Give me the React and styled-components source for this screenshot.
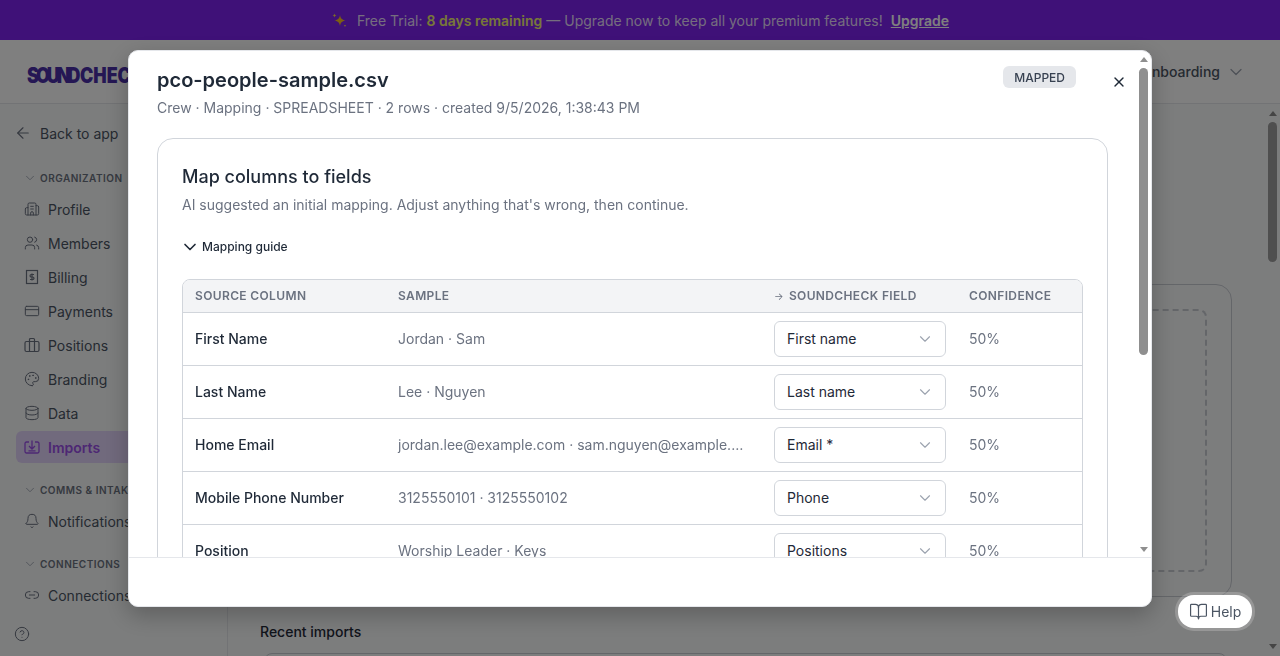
import React from 'react';
import styled, { createGlobalStyle } from 'styled-components';
import {
  ArrowLeft,
  BookOpen,
  Building2,
  Bell,
  ChevronDown,
  CircleHelp,
  CreditCard,
  Database,
  Link2,
  Palette,
  Users,
  X,
} from 'lucide-react';

const GlobalStyle = createGlobalStyle`
  * { box-sizing: border-box; }
  html, body { margin: 0; height: 100%; overflow: hidden; }
  body {
    font-family: 'Inter', 'Liberation Sans', sans-serif;
    font-size: 14px;
    color: #1f2937;
    background: #f9fafb;
  }
`;

const Shell = styled.div`
  display: flex;
  flex-direction: column;
  height: 656px;
  overflow: hidden;
`;

const Banner = styled.div`
  flex: none;
  height: 40px;
  background: #7e22f0;
  color: rgba(255, 255, 255, 0.85);
  display: flex;
  align-items: center;
  justify-content: center;
  gap: 9px;
  font-size: 14px;

  & b {
    color: #f0f070;
    font-weight: 600;
  }
  & a {
    color: #fff;
    font-weight: 600;
    text-decoration: underline;
    margin-left: -1px;
  }
`;

const TopBar = styled.header`
  flex: none;
  height: 64px;
  background: #fff;
  border-bottom: 1px solid #e5e7eb;
  display: flex;
  align-items: center;
  justify-content: space-between;
  padding: 0 34px 0 27px;
`;

const Logo = styled.div`
  margin-top: 8px;
  font-size: 21px;
  font-weight: 900;
  color: #4a2fa8;
  white-space: nowrap;
  transform: scaleX(0.85);
  transform-origin: left center;

  & span {
    letter-spacing: -3.5px;
    margin-right: 3px;
  }
`;

const WorkspaceMenu = styled.div`
  display: flex;
  align-items: center;
  gap: 6px;
  font-size: 14px;
  font-weight: 500;
  color: #4b5563;

  & svg {
    color: #9ca3af;
  }
`;

const Body = styled.div`
  flex: 1;
  display: flex;
  min-height: 0;
`;

const Sidebar = styled.aside`
  flex: none;
  width: 228px;
  border-right: 1px solid #e5e7eb;
  padding: 13px 16px 14px;
  display: flex;
  flex-direction: column;
`;

const BackLink = styled.div`
  height: 32px;
  display: flex;
  align-items: center;
  gap: 8px;
  margin: 0 0 20px -2px;
  color: #4b5563;

  & svg {
    color: #6b7280;
  }
`;

const SectionLabel = styled.div`
  height: 16px;
  display: flex;
  align-items: center;
  gap: 3px;
  padding: 1px 0 0 7px;
  margin: ${(p) => (p.$first ? '0' : '18px')} 0 8px;
  font-size: 10px;
  font-weight: 600;
  letter-spacing: 0.05em;
  color: #6b7280;
  white-space: nowrap;

  & svg {
    color: #9ca3af;
  }
`;

const NavList = styled.nav`
  display: flex;
  flex-direction: column;
  gap: 2px;
`;

const NavItem = styled.div`
  height: 32px;
  display: flex;
  align-items: center;
  gap: 8px;
  padding-left: 8px;
  border-radius: 6px;
  white-space: nowrap;
  background: ${(p) => (p.$active ? '#e3d4fb' : 'transparent')};
  color: ${(p) => (p.$active ? '#9b4fe8' : '#4b5563')};
  font-weight: ${(p) => (p.$active ? 600 : 400)};

  & svg {
    flex: none;
    color: ${(p) => (p.$active ? '#9b4fe8' : '#6b7280')};
  }
`;

const SidebarHelp = styled.div`
  margin: auto 0 0 -2px;
  height: 16px;
  color: #6b7280;
`;

const Main = styled.main`
  flex: 1;
  min-width: 0;
  overflow: hidden;
  padding: 180px 33px 0 32px;
`;

const UploadCard = styled.section`
  height: 313px;
  border: 1px solid #c9cdd3;
  border-radius: 16px;
  padding: 24px;
`;

const DropZone = styled.div`
  height: 100%;
  border: 2px dashed #c9cdd3;
  border-radius: 8px;
`;

const RecentTitle = styled.h2`
  margin: 25px 0 11px;
  font-size: 14px;
  line-height: 20px;
  font-weight: 500;
  color: #1f2937;
`;

const RecentTable = styled.div`
  height: 40px;
  margin: 0 5px 0 4px;
  border: 1px solid #c9cdd3;
  border-radius: 8px;
`;

const Rail = styled.div`
  flex: none;
  width: 15px;
  display: flex;
  flex-direction: column;
  align-items: center;
  padding: ${(p) => p.$pad};
`;

const ArrowUp = styled.div`
  flex: none;
  width: 0;
  height: 0;
  border: 4.5px solid transparent;
  border-top: 0;
  border-bottom: 5px solid ${(p) => p.$color};
`;

const ArrowDown = styled(ArrowUp)`
  margin-top: auto;
  border: 4.5px solid transparent;
  border-bottom: 0;
  border-top: 5px solid ${(p) => p.$color};
`;

const Thumb = styled.div`
  flex: none;
  width: 9px;
  height: ${(p) => p.$height}px;
  margin-top: 6px;
  border-radius: 5px;
  background: ${(p) => p.$color};
`;

const Backdrop = styled.div`
  position: fixed;
  inset: 0;
  background: rgba(0, 0, 0, 0.5);
`;

const Modal = styled.div`
  position: fixed;
  left: 128px;
  top: 50px;
  width: 1024px;
  height: 557px;
  background: #fff;
  border: 1px solid #e5e7eb;
  border-radius: 10px;
  box-shadow: 0 8px 24px rgba(0, 0, 0, 0.25);
  display: flex;
  flex-direction: column;
  overflow: hidden;
`;

const ModalBody = styled.div`
  flex: 1;
  min-height: 0;
  display: flex;
`;

const ModalScroll = styled.div`
  flex: 1;
  min-width: 0;
  overflow: hidden;
  padding: 15px 28px 0 28px;
`;

const ModalFooter = styled.div`
  flex: none;
  height: 49px;
  border-top: 1px solid #e5e7eb;
`;

const ModalHeader = styled.div`
  display: flex;
  align-items: flex-start;
  justify-content: space-between;
  margin-bottom: 20px;
`;

const FileName = styled.h1`
  margin: 0 0 4px;
  font-size: 20px;
  line-height: 28px;
  font-weight: 600;
  color: #1f2937;
`;

const FileMeta = styled.p`
  margin: 0;
  font-size: 14px;
  line-height: 20px;
  color: #6b7280;
`;

const HeaderActions = styled.div`
  display: flex;
  align-items: flex-start;
  gap: 35px;
  margin-right: -19px;
`;

const Badge = styled.span`
  height: 22px;
  padding: 0 11px;
  display: flex;
  align-items: center;
  border-radius: 6px;
  background: #e5e7eb;
  color: #374151;
  font-size: 12px;
  font-weight: 500;
`;

const CloseButton = styled.button`
  border: 0;
  padding: 0;
  margin-top: 8px;
  background: none;
  color: #1f2937;
  display: flex;
`;

const Card = styled.section`
  border: 1px solid #d1d5db;
  border-radius: 16px;
  padding: 24px;
`;

const CardTitle = styled.h2`
  margin: 0 0 4px;
  font-size: 18px;
  line-height: 28px;
  font-weight: 500;
  color: #1f2937;
`;

const CardHint = styled.p`
  margin: 0 0 22px;
  font-size: 14px;
  line-height: 20px;
  color: #6b7280;
`;

const GuideToggle = styled.div`
  display: flex;
  align-items: center;
  gap: 2px;
  margin-left: -2px;
  font-size: 12px;
  line-height: 20px;
  font-weight: 500;
  color: #1f2937;
  margin-bottom: 22px;

  & svg {
    flex: none;
  }
`;

const TableFrame = styled.div`
  border: 1px solid #d1d5db;
  border-radius: 8px;
  overflow: hidden;
`;

const Row = styled.div`
  display: grid;
  grid-template-columns: 203px 376px 195px 1fr;
  align-items: center;
  height: ${(p) => (p.$head ? '33px' : '53px')};
  background: ${(p) => (p.$head ? '#f3f4f6' : '#fff')};
  border-bottom: 1px solid #d1d5db;
`;

const HeadCell = styled.div`
  padding: 0 0 2px 12px;
  font-size: 12px;
  font-weight: 600;
  letter-spacing: 0.03em;
  color: #6b7280;
  white-space: nowrap;

  & small {
    font-size: 10px;
    font-weight: 400;
    letter-spacing: 0;
    margin-right: 2px;
  }
`;

const SourceCell = styled.div`
  padding: 0 0 2px 12px;
  font-weight: 500;
  color: #1f2937;
  white-space: nowrap;
`;

const SampleCell = styled.div`
  padding: 0 18px 2px 12px;
  color: #6b7280;
  white-space: nowrap;
  overflow: hidden;
  text-overflow: ellipsis;
`;

const FieldCell = styled.div`
  padding-left: 12px;
`;

const FieldSelect = styled.div`
  width: 172px;
  height: 36px;
  display: flex;
  align-items: center;
  justify-content: space-between;
  padding: 0 11px 1px 12px;
  border: 1px solid #d1d5db;
  border-radius: 6px;
  background: #fff;
  color: #1f2937;

  & svg {
    color: #9ca3af;
  }
`;

const ConfidenceCell = styled.div`
  padding: 0 0 2px 12px;
  color: #6b7280;
`;

const HelpButton = styled.button`
  position: fixed;
  left: 1178px;
  top: 595px;
  width: 74px;
  height: 33px;
  border: 0;
  border-radius: 16px;
  background: #fff;
  box-shadow: 0 0 0 3px rgba(255, 255, 255, 0.2);
  display: flex;
  align-items: center;
  justify-content: center;
  gap: 3px;
  font-family: inherit;
  font-size: 14px;
  color: #4b5563;
`;

const Sparkle = () => (
  <svg width="17" height="17" viewBox="0 0 17 17">
    <path d="M9 3c.6 3.4 1.8 4.8 5.500 5.500C10.800 9.200 9.600 10.600 9 14c-.6-3.400-1.800-4.800-5.500-5.500C7.200 7.800 8.400 6.400 9 3z" fill="#fbbf24" />
    <path d="M3.500 1.500c.2 1.200.7 1.700 2 2-1.300.3-1.800.8-2 2-.2-1.200-.7-1.700-2-2 1.300-.3 1.800-.8 2-2z" fill="#fcd34d" />
    <path d="M14 12.500c.1.800.5 1.100 1.300 1.300-.8.200-1.200.5-1.300 1.300-.1-.8-.5-1.100-1.300-1.300.8-.2 1.200-.5 1.300-1.300z" fill="#fcd34d" />
  </svg>
);

const BillingIcon = () => (
  <svg width="16" height="16" viewBox="0 0 16 16" fill="none" stroke="currentColor" strokeWidth="1.2">
    <rect x="2.500" y="1.500" width="11" height="13" />
    <path d="M10 5.500H7.300a1.200 1.200 0 0 0 0 2.500h1.400a1.200 1.200 0 0 1 0 2.500H6M8 4.500v7" />
  </svg>
);

const PositionsIcon = () => (
  <svg width="16" height="16" viewBox="0 0 16 16" fill="none" stroke="currentColor" strokeWidth="1.2">
    <rect x="1" y="4.500" width="14" height="10" rx="1.500" />
    <path d="M5.500 4.500V2.500a1 1 0 0 1 1-1h3a1 1 0 0 1 1 1v2M5.500 4.500v10M10.500 4.500v10" />
  </svg>
);

const ImportsIcon = () => (
  <svg width="16" height="16" viewBox="0 0 16 16" fill="none" stroke="currentColor" strokeWidth="1.300">
    <path d="M5 3H2.500A1.500 1.500 0 0 0 1 4.500v8A1.500 1.500 0 0 0 2.500 14h11a1.500 1.500 0 0 0 1.500-1.500v-8A1.500 1.500 0 0 0 13.500 3H11" />
    <path d="M8 1.500v8M5 7l3 3 3-3M4.500 11.800h7" />
  </svg>
);

const rows = [
  ['First Name', 'Jordan · Sam', 'First name'],
  ['Last Name', 'Lee · Nguyen', 'Last name'],
  ['Home Email', 'jordan.lee@example.com · sam.nguyen@example.com', 'Email *'],
  ['Mobile Phone Number', '3125550101 · 3125550102', 'Phone'],
  ['Position', 'Worship Leader · Keys', 'Positions'],
];

const orgItems = [
  { label: 'Profile', icon: <Building2 size={16} strokeWidth={1.5} /> },
  { label: 'Members', icon: <Users size={16} strokeWidth={1.5} /> },
  { label: 'Billing', icon: <BillingIcon /> },
  { label: 'Payments', icon: <CreditCard size={16} strokeWidth={1.5} /> },
  { label: 'Positions', icon: <PositionsIcon /> },
  { label: 'Branding', icon: <Palette size={16} strokeWidth={1.5} /> },
  { label: 'Data', icon: <Database size={16} strokeWidth={1.5} /> },
  { label: 'Imports', icon: <ImportsIcon />, active: true },
];

const App = () => {
  return (
    <>
      <GlobalStyle />
      <Shell>
        <Banner>
          <Sparkle />
          <span>
            Free Trial: <b>8 days remaining</b> — Upgrade now to keep all your premium features!
          </span>
          <a>Upgrade</a>
        </Banner>
        <TopBar>
          <Logo>
            <span>SOUND</span>CHECK
          </Logo>
          <WorkspaceMenu>
            Onboarding
            <ChevronDown size={20} strokeWidth={1.5} />
          </WorkspaceMenu>
        </TopBar>
        <Body>
          <Sidebar>
            <BackLink>
              <ArrowLeft size={18} strokeWidth={1.5} />
              Back to app
            </BackLink>
            <SectionLabel $first>
              <ChevronDown size={14} strokeWidth={1.5} />
              ORGANIZATION
            </SectionLabel>
            <NavList>
              {orgItems.map((item) => (
                <NavItem key={item.label} $active={item.active}>
                  {item.icon}
                  {item.label}
                </NavItem>
              ))}
            </NavList>
            <SectionLabel>
              <ChevronDown size={14} strokeWidth={1.5} />
              COMMS &amp; INTAKE
            </SectionLabel>
            <NavList>
              <NavItem>
                <Bell size={16} strokeWidth={1.5} />
                Notifications
              </NavItem>
            </NavList>
            <SectionLabel>
              <ChevronDown size={14} strokeWidth={1.5} />
              CONNECTIONS
            </SectionLabel>
            <NavList>
              <NavItem>
                <Link2 size={16} strokeWidth={1.5} />
                Connections
              </NavItem>
            </NavList>
            <SidebarHelp>
              <CircleHelp size={16} strokeWidth={1.5} />
            </SidebarHelp>
          </Sidebar>
          <Main>
            <UploadCard>
              <DropZone />
            </UploadCard>
            <RecentTitle>Recent imports</RecentTitle>
            <RecentTable />
          </Main>
          <Rail $pad="7px 0 7px">
            <ArrowUp $color="#8a8a8a" />
            <Thumb $color="#9e9e9e" $height={140} />
            <ArrowDown $color="#8a8a8a" />
          </Rail>
        </Body>
      </Shell>
      <Backdrop />
      <Modal>
        <ModalBody>
          <ModalScroll>
            <ModalHeader>
              <div>
                <FileName>pco-people-sample.csv</FileName>
                <FileMeta>Crew · Mapping · SPREADSHEET · 2 rows · created 9/5/2026, 1:38:43 PM</FileMeta>
              </div>
              <HeaderActions>
                <Badge>MAPPED</Badge>
                <CloseButton>
                  <X size={16} strokeWidth={2} />
                </CloseButton>
              </HeaderActions>
            </ModalHeader>
            <Card>
              <CardTitle>Map columns to fields</CardTitle>
              <CardHint>AI suggested an initial mapping. Adjust anything that's wrong, then continue.</CardHint>
              <GuideToggle>
                <ChevronDown size={20} strokeWidth={2} />
                Mapping guide
              </GuideToggle>
              <TableFrame>
                <Row $head>
                  <HeadCell>SOURCE COLUMN</HeadCell>
                  <HeadCell>SAMPLE</HeadCell>
                  <HeadCell>
                    <small>→</small> SOUNDCHECK FIELD
                  </HeadCell>
                  <HeadCell>CONFIDENCE</HeadCell>
                </Row>
                {rows.map(([source, sample, field]) => (
                  <Row key={source}>
                    <SourceCell>{source}</SourceCell>
                    <SampleCell>{sample}</SampleCell>
                    <FieldCell>
                      <FieldSelect>
                        {field}
                        <ChevronDown size={18} strokeWidth={1.5} />
                      </FieldSelect>
                    </FieldCell>
                    <ConfidenceCell>50%</ConfidenceCell>
                  </Row>
                ))}
              </TableFrame>
            </Card>
          </ModalScroll>
          <Rail $pad="6px 0 5px">
            <ArrowUp $color="#8f8f8f" />
            <Thumb $color="#8f8f8f" $height={287} />
            <ArrowDown $color="#8f8f8f" />
          </Rail>
        </ModalBody>
        <ModalFooter />
      </Modal>
      <HelpButton>
        <BookOpen size={19} strokeWidth={1.5} />
        Help
      </HelpButton>
    </>
  );
};

export default App;
